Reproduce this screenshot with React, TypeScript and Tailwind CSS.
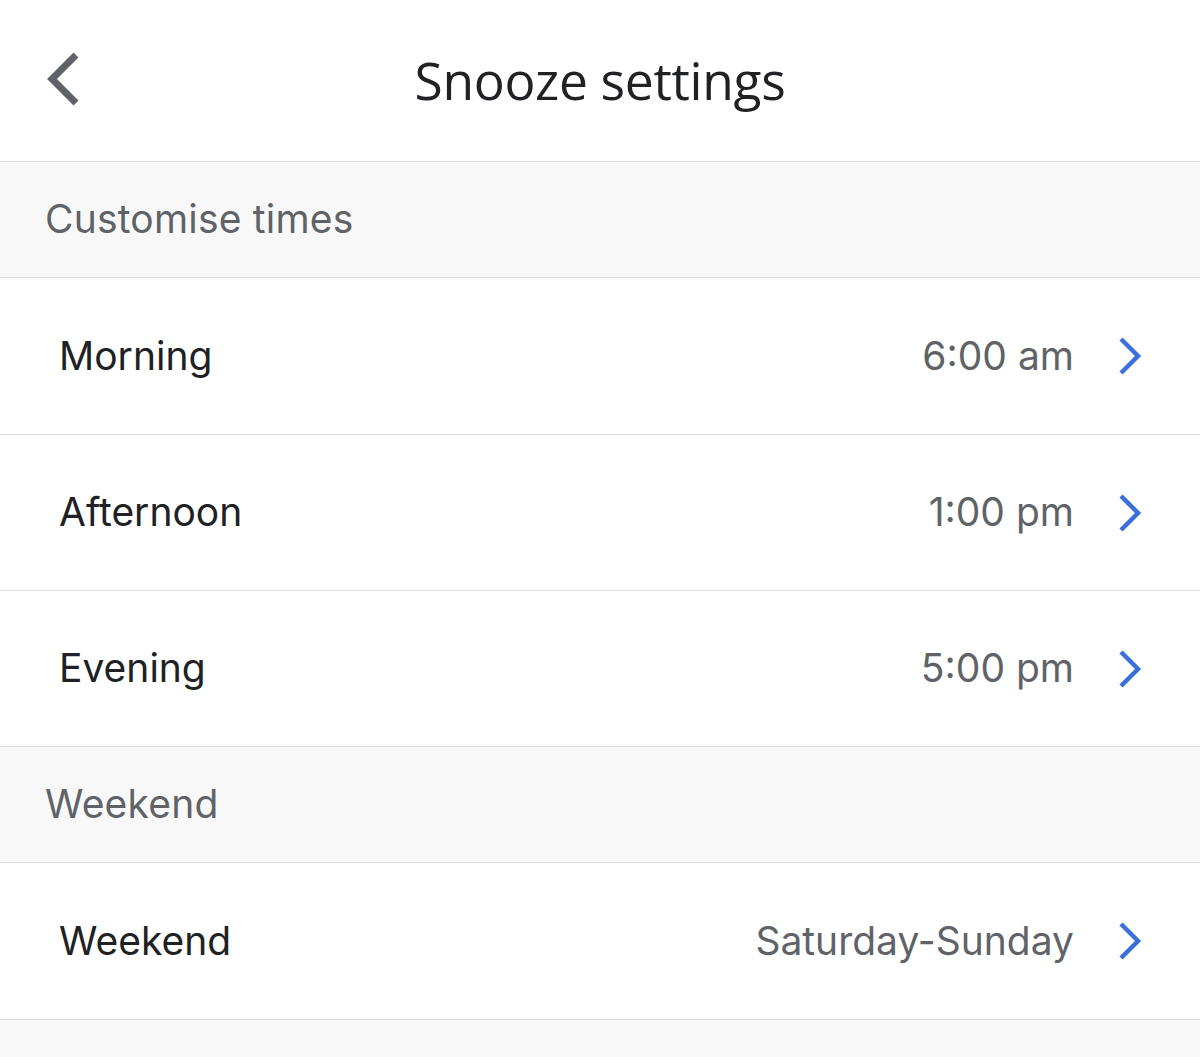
import React from 'react'

const body = { fontFamily: 'Inter, "Noto Sans", sans-serif' }

const Chevron: React.FC = () => (
  <svg width="28" height="40" viewBox="0 0 28 40" fill="none" className="shrink-0">
    <path d="M5 3 L22 20 L5 37" stroke="#3b6fd9" strokeWidth="4.5" strokeLinecap="butt" strokeLinejoin="miter" />
  </svg>
)

const SectionHeader: React.FC<{ label: string }> = ({ label }) => (
  <div className="h-[116px] flex items-center px-[45px] bg-[#f8f8f9] border-b border-[#dcdcde]">
    <span className="text-[39px] text-[#5f6368] tracking-[0.2px]" style={body}>
      {label}
    </span>
  </div>
)

const Row: React.FC<{ label: string; value: string; first?: boolean }> = ({ label, value, first }) => (
  <div
    className={`${first ? 'h-[157px]' : 'h-[156px]'} flex items-center pl-[59px] pr-[56px] bg-white border-b border-[#dcdcde]`}
  >
    <span className="flex-1 text-[39px] text-[#202124]" style={body}>
      {label}
    </span>
    <span className="text-[39px] text-[#5f6368] mr-[42px]" style={body}>
      {value}
    </span>
    <Chevron />
  </div>
)

export default function App() {
  return (
    <div className="w-[1200px] min-h-[1057px] bg-[#f8f8f9]">
      <header className="h-[162px] bg-white border-b border-[#dcdcde] relative flex items-center justify-center">
        <button className="absolute left-[40px] top-[50px] p-0">
          <svg width="46" height="60" viewBox="0 0 46 60" fill="none">
            <path d="M36 5 L12 29 L36 53" stroke="#5f6368" strokeWidth="7" />
          </svg>
        </button>
        <h1 className="text-[51.5px] text-[#202124] tracking-[-0.3px]" style={{ fontFamily: '"Open Sans", Lato, sans-serif' }}>
          Snooze settings
        </h1>
      </header>
      <SectionHeader label="Customise times" />
      <Row first label="Morning" value="6:00 am" />
      <Row label="Afternoon" value="1:00 pm" />
      <Row label="Evening" value="5:00 pm" />
      <SectionHeader label="Weekend" />
      <Row first label="Weekend" value="Saturday-Sunday" />
    </div>
  )
}
